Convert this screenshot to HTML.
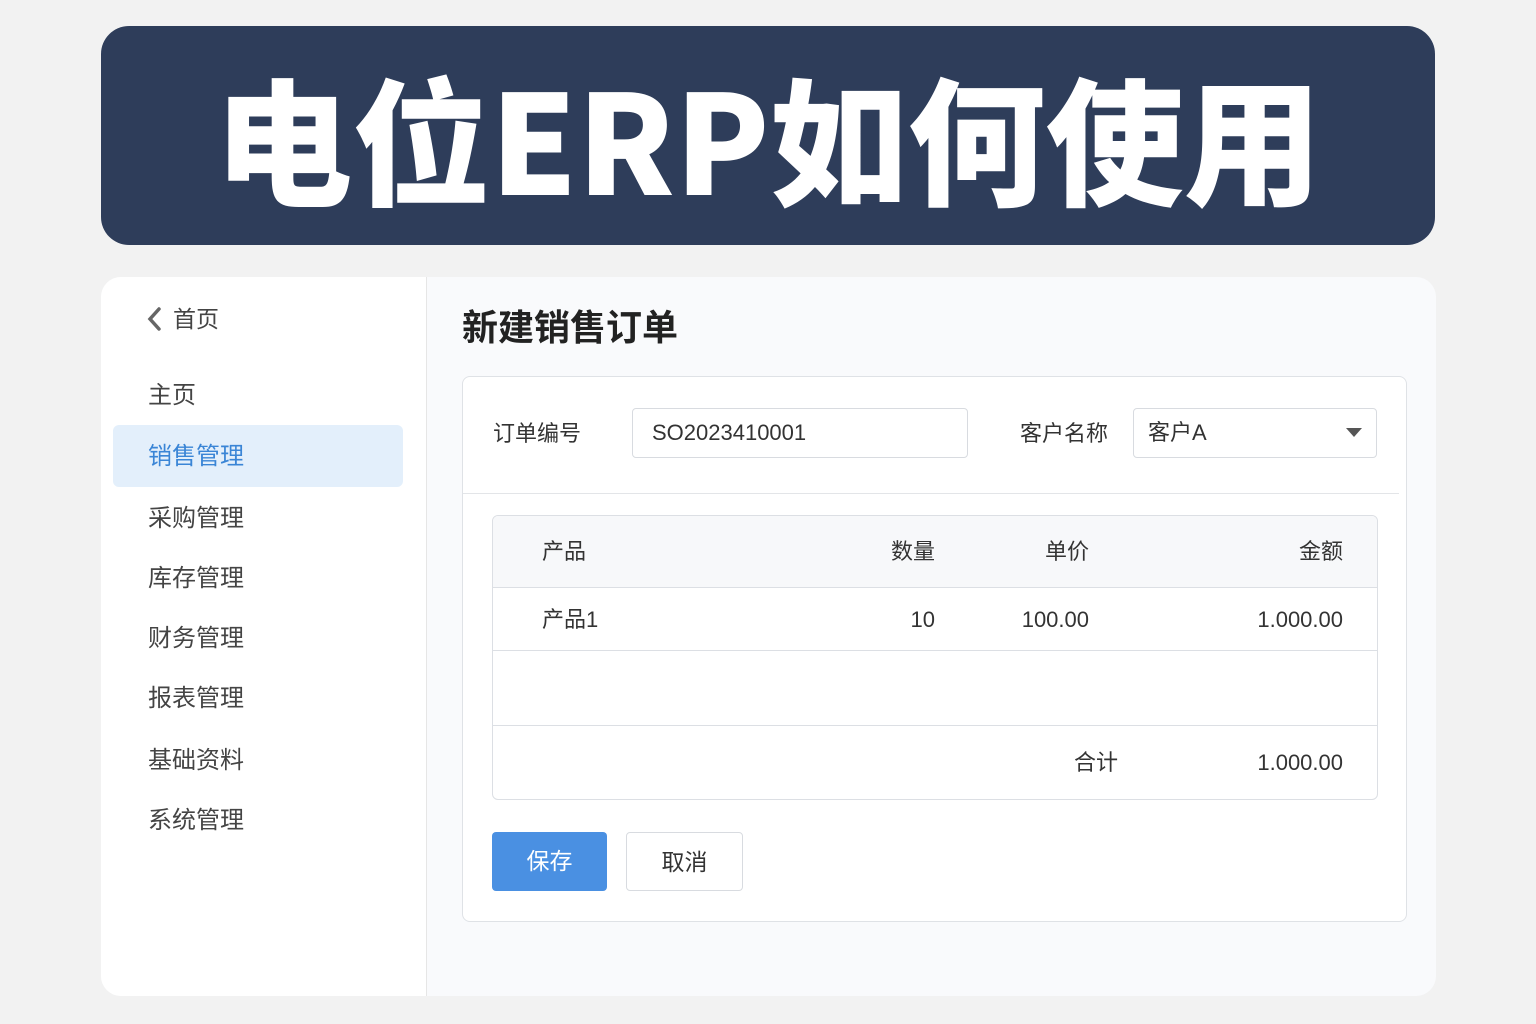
<!DOCTYPE html>
<html><head><meta charset="utf-8"><style>
*{margin:0;padding:0;box-sizing:border-box}
body{width:1536px;height:1024px;background:#f2f2f2;font-family:"Liberation Sans","Noto Sans CJK SC",sans-serif;position:relative;overflow:hidden;color:#333}
.abs{position:absolute}
.banner{left:101px;top:26px;width:1334px;height:219px;background:#2e3d5a;border-radius:28px;color:#fff;font-size:138px;font-weight:900;text-align:center;line-height:219px;letter-spacing:0px;font-family:"Noto Sans CJK SC",sans-serif}
.card{left:101px;top:277px;width:1335px;height:719px;background:#f9fafc;border-radius:20px;overflow:hidden}
.side{left:0;top:0;width:326px;height:719px;background:#fff;border-right:1px solid #e6e6e6}
.mi{position:absolute;left:47px;font-size:24px;color:#444;line-height:30px}
.sel{left:12px;top:148px;width:290px;height:62px;background:#e3effb;border-radius:6px}
.panel{left:361px;top:99px;width:945px;height:546px;background:#fff;border:1px solid #dfe2e6;border-radius:8px}
.lbl{font-size:22px;color:#333;line-height:30px}
.inp{border:1px solid #d8dbe0;border-radius:4px;background:#fff;font-size:22px;line-height:48px;padding-left:19px}
.tbl{left:29px;top:138px;width:886px;height:285px;border:1px solid #dcdfe4;border-radius:6px;overflow:hidden}
.c{position:absolute;font-size:22px;line-height:30px;color:#333}
.btn{border-radius:4px;font-size:23px;text-align:center;line-height:58px}
</style></head><body>
<div class="abs banner">电位ERP如何使用</div>
<div class="abs card">
 <div class="abs side">
  <svg class="abs" style="left:45px;top:30px" width="16" height="24" viewBox="0 0 16 24"><path d="M13 2 L4 12 L13 22" stroke="#666" stroke-width="3.5" fill="none" stroke-linecap="round"/></svg>
  <div class="mi" style="left:72px;top:27px;font-size:23px">首页</div>
  <div class="mi" style="top:104px">主页</div>
  <div class="abs sel"></div>
  <div class="mi" style="top:165px;color:#3a85d6">销售管理</div>
  <div class="mi" style="top:227px">采购管理</div>
  <div class="mi" style="top:287px">库存管理</div>
  <div class="mi" style="top:347px">财务管理</div>
  <div class="mi" style="top:407px">报表管理</div>
  <div class="mi" style="top:469px">基础资料</div>
  <div class="mi" style="top:529px">系统管理</div>
 </div>
 <div class="abs" style="left:361px;top:28px;font-size:36px;font-weight:700;color:#222;line-height:46px">新建销售订单</div>
 <div class="abs panel">
  <div class="abs lbl" style="left:30px;top:42px">订单编号</div>
  <div class="abs inp" style="left:169px;top:31px;width:336px;height:50px">SO2023410001</div>
  <div class="abs lbl" style="left:557px;top:42px">客户名称</div>
  <div class="abs inp" style="left:670px;top:31px;width:244px;height:50px;padding-left:14px">客户A
   <svg class="abs" style="right:14px;top:19px" width="16" height="10"><path d="M0 0H16L8 9Z" fill="#555"/></svg></div>
  <div class="abs" style="left:0;top:116px;width:936px;height:1px;background:#e3e5e8"></div>
  <div class="abs tbl">
   <div class="abs" style="left:0;top:0;width:886px;height:72px;background:#f7f8fa;border-bottom:1px solid #dcdfe4"></div>
   <div class="abs" style="left:0;top:134px;width:886px;height:1px;background:#dcdfe4"></div>
   <div class="abs" style="left:0;top:209px;width:886px;height:1px;background:#dcdfe4"></div>
   <div class="c" style="left:49px;top:21px">产品</div>
   <div class="c" style="right:442px;top:21px">数量</div>
   <div class="c" style="right:288px;top:21px">单价</div>
   <div class="c" style="right:34px;top:21px">金额</div>
   <div class="c" style="left:49px;top:89px">产品1</div>
   <div class="c" style="right:442px;top:89px">10</div>
   <div class="c" style="right:288px;top:89px">100.00</div>
   <div class="c" style="right:34px;top:89px">1.000.00</div>
   <div class="c" style="right:259px;top:232px">合计</div>
   <div class="c" style="right:34px;top:232px">1.000.00</div>
  </div>
  <div class="abs btn" style="left:29px;top:455px;width:115px;height:59px;background:#4a90e2;color:#fff">保存</div>
  <div class="abs btn" style="left:163px;top:455px;width:117px;height:59px;background:#fff;border:1px solid #d8dbe0;color:#333">取消</div>
 </div>
</div>
</body></html>
